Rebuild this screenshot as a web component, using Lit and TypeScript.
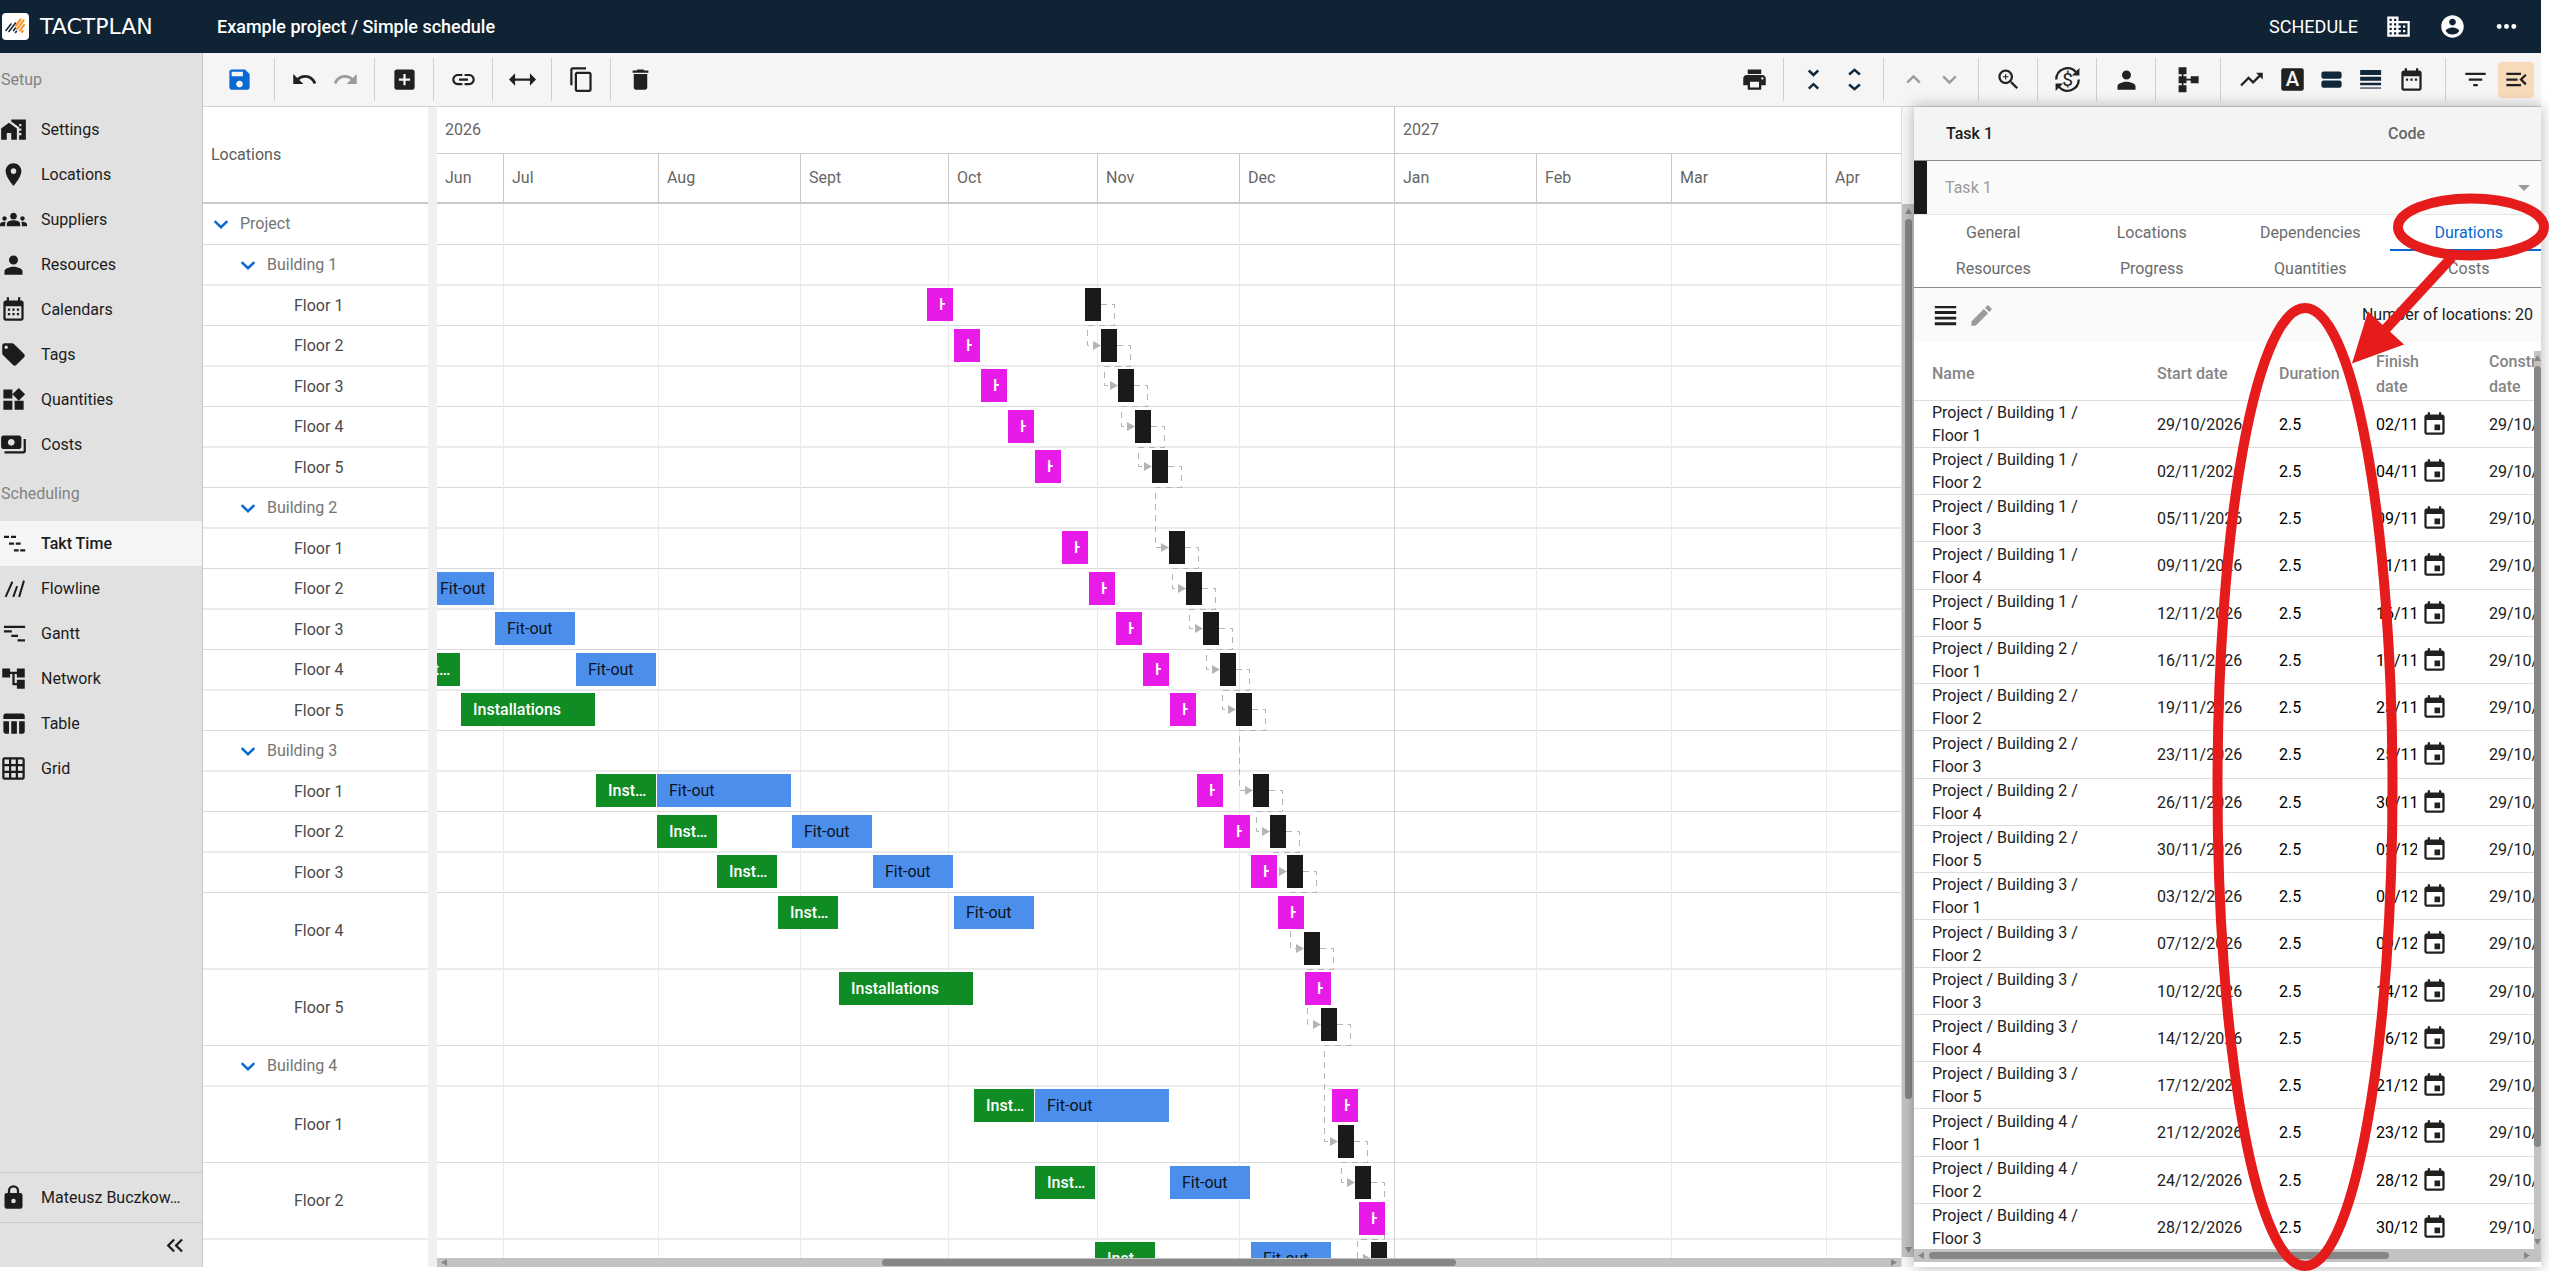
import { LitElement, html, css, svg, nothing } from "lit";
import { customElement, property } from "lit/decorators.js";
import { classMap } from "lit/directives/class-map.js";

const ICONS: Record<string, unknown> = {
  settings: svg`<path d="M1 11v10h5v-6h4v6h5V11L8 6zM10 3v1.97l7 5V11h2v2h-2v2h2v2h-2v4h6V3H10zm9 6h-2V7h2v2z"/>`,
  place: svg`<path d="M12 2C8.13 2 5 5.13 5 9c0 5.25 7 13 7 13s7-7.75 7-13c0-3.87-3.13-7-7-7zm0 9.5c-1.38 0-2.5-1.12-2.5-2.5s1.12-2.5 2.5-2.5 2.5 1.12 2.5 2.5-1.12 2.5-2.5 2.5z"/>`,
  groups: svg`<path d="M12 12.75c1.63 0 3.07.39 4.24.9 1.08.48 1.76 1.56 1.76 2.73V18H6v-1.61c0-1.18.68-2.26 1.76-2.73 1.17-.52 2.61-.91 4.24-.91zM4 13c1.1 0 2-.9 2-2s-.9-2-2-2-2 .9-2 2 .9 2 2 2zm1.13 1.1c-.37-.06-.74-.1-1.13-.1-.99 0-1.93.21-2.78.58C.48 14.9 0 15.62 0 16.43V18h4.5v-1.61c0-.83.23-1.61.63-2.29zM20 13c1.1 0 2-.9 2-2s-.9-2-2-2-2 .9-2 2 .9 2 2 2zm4 3.43c0-.81-.48-1.53-1.22-1.85-.85-.37-1.79-.58-2.78-.58-.39 0-.76.04-1.13.1.4.68.63 1.46.63 2.29V18H24v-1.57zM12 6c1.66 0 3 1.34 3 3s-1.34 3-3 3-3-1.34-3-3 1.34-3 3-3z"/>`,
  person: svg`<path d="M12 12c2.21 0 4-1.79 4-4s-1.79-4-4-4-4 1.79-4 4 1.79 4 4 4zm0 2c-2.67 0-8 1.34-8 4v3h16v-3c0-2.66-5.33-4-8-4z"/>`,
  calendar: svg`<path d="M19 4h-1V1h-2v3H8V1H6v3H5c-1.11 0-1.99.9-1.99 2L3 20c0 1.1.89 2 2 2h14c1.1 0 2-.9 2-2V6c0-1.1-.9-2-2-2zm0 16H5V9h14v11zM9 13H7v-2h2v2zm4 0h-2v-2h2v2zm4 0h-2v-2h2v2zm-8 4H7v-2h2v2zm4 0h-2v-2h2v2zm4 0h-2v-2h2v2z"/>`,
  tag: svg`<path d="M5.5 7A1.5 1.5 0 0 1 4 5.5 1.5 1.5 0 0 1 5.5 4 1.5 1.5 0 0 1 7 5.5 1.5 1.5 0 0 1 5.5 7m15.91 4.58-9-9C12.05 2.22 11.55 2 11 2H4c-1.11 0-2 .89-2 2v7c0 .55.22 1.05.59 1.41l9 9c.36.36.86.59 1.41.59.55 0 1.05-.23 1.41-.59l7-7c.37-.36.59-.87.59-1.41 0-.56-.23-1.06-.59-1.42z"/>`,
  widgets: svg`<path d="M13 13v8h8v-8h-8zM3 21h8v-8H3v8zM3 3v8h8V3H3zm13.66-1.31L11 7.34 16.66 13l5.66-5.66-5.66-5.65z"/>`,
  payments: svg`<path d="M19 14V6c0-1.1-.9-2-2-2H3c-1.1 0-2 .9-2 2v8c0 1.1.9 2 2 2h14c1.1 0 2-.9 2-2zm-9-1c-1.66 0-3-1.34-3-3s1.34-3 3-3 3 1.34 3 3-1.34 3-3 3zm13-6v11c0 1.1-.9 2-2 2H4v-2h17V7h2z"/>`,
  takt: svg`<path d="M3.5 5H8v2H3.5zM9.8 5h4.4v2H9.8zM8 11h4.5v2H8zM14 11h4.4v2H14zM12.4 17h4.2v2h-4.2zM18 17h4.4v2H18z"/>`,
  flowline: svg`<path d="M5 19.5 11 6M11.8 19.5 15.2 10M17 19.5 21.3 5" fill="none" stroke="currentColor" stroke-width="1.8"/>`,
  gantt: svg`<path d="M3.5 5h18.8v2H3.5zM3.5 9h7v2h-7zM10 13h6v2h-6zM15.6 17h6.6v2h-6.6z"/>`,
  network: svg`<path d="M22 11V3h-7v3H9V3H2v8h7V8h2v10h4v3h7v-8h-7v3h-2V8h2v3z"/>`,
  table: svg`<path d="M10 10h5v11h-5zM17 21h3c1.1 0 2-.9 2-2v-9h-5v11zm3-18H5c-1.1 0-2 .9-2 2v3h19V5c0-1.1-.9-2-2-2zM3 19c0 1.1.9 2 2 2h3V10H3v9z"/>`,
  grid: svg`<path d="M20 2H4c-1.1 0-2 .9-2 2v16c0 1.1.9 2 2 2h16c1.1 0 2-.9 2-2V4c0-1.1-.9-2-2-2zM8 20H4v-4h4v4zm0-6H4v-4h4v4zm0-6H4V4h4v4zm6 12h-4v-4h4v4zm0-6h-4v-4h4v4zm0-6h-4V4h4v4zm6 12h-4v-4h4v4zm0-6h-4v-4h4v4zm0-6h-4V4h4v4z"/>`,
  lock: svg`<path d="M12 17a2 2 0 0 0 2-2 2 2 0 0 0-2-2 2 2 0 0 0-2 2 2 2 0 0 0 2 2m6-9a2 2 0 0 1 2 2v10a2 2 0 0 1-2 2H6a2 2 0 0 1-2-2V10a2 2 0 0 1 2-2h1V6a5 5 0 0 1 5-5 5 5 0 0 1 5 5v2h1m-6-5a3 3 0 0 0-3 3v2h6V6a3 3 0 0 0-3-3z"/>`,
  dblLeft: svg`<path d="M19.4 7.41 18 6l-6 6 6 6 1.4-1.41L14.8 12zM12.4 7.41 11 6l-6 6 6 6 1.4-1.41L7.8 12z"/>`,
  save: svg`<path d="M17 3H5c-1.11 0-2 .9-2 2v14c0 1.1.89 2 2 2h14c1.1 0 2-.9 2-2V7l-4-4zm-5 16c-1.66 0-3-1.34-3-3s1.34-3 3-3 3 1.34 3 3-1.34 3-3 3zm3-10H5V5h10v4z"/>`,
  undo: svg`<path d="M12.5 8c-2.65 0-5.05.99-6.9 2.6L2 7v9h9l-3.62-3.62c1.39-1.16 3.16-1.88 5.12-1.88 3.54 0 6.55 2.31 7.6 5.5l2.37-.78C21.08 11.03 17.15 8 12.5 8z"/>`,
  redo: svg`<path d="M18.4 10.6C16.55 8.99 14.15 8 11.5 8c-4.65 0-8.58 3.03-9.96 7.22L3.9 16c1.05-3.19 4.05-5.5 7.6-5.5 1.95 0 3.73.72 5.12 1.88L13 16h9V7l-3.6 3.6z"/>`,
  add: svg`<path d="M19 3H5c-1.11 0-2 .9-2 2v14c0 1.1.89 2 2 2h14c1.1 0 2-.9 2-2V5c0-1.1-.9-2-2-2zm-2 10h-4v4h-2v-4H7v-2h4V7h2v4h4v2z"/>`,
  link: svg`<path d="M3.9 12c0-1.71 1.39-3.1 3.1-3.1h4V7H7c-2.76 0-5 2.24-5 5s2.24 5 5 5h4v-1.9H7c-1.71 0-3.1-1.39-3.1-3.1zM8 13h8v-2H8v2zm9-6h-4v1.9h4c1.71 0 3.1 1.39 3.1 3.1s-1.39 3.1-3.1 3.1h-4V17h4c2.76 0 5-2.24 5-5s-2.24-5-5-5z"/>`,
  width: svg`<path d="M0 12 5.4 6.4V11h13.2V6.4L24 12l-5.4 5.6V13H5.4v4.6z"/>`,
  copy: svg`<path d="M16 1H4c-1.1 0-2 .9-2 2v14h2V3h12V1zm3 4H8c-1.1 0-2 .9-2 2v14c0 1.1.9 2 2 2h11c1.1 0 2-.9 2-2V7c0-1.1-.9-2-2-2zm0 16H8V7h11v14z"/>`,
  trash: svg`<path d="M6 19c0 1.1.9 2 2 2h8c1.1 0 2-.9 2-2V7H6v12zM19 4h-3.5l-1-1h-5l-1 1H5v2h14V4z"/>`,
  print: svg`<path d="M19 8H5c-1.66 0-3 1.34-3 3v6h4v4h12v-4h4v-6c0-1.66-1.34-3-3-3zm-3 11H8v-5h8v5zm3-7c-.55 0-1-.45-1-1s.45-1 1-1 1 .45 1 1-.45 1-1 1zm-1-9H6v4h12V3z"/>`,
  collapse: svg`<path d="m7.8 4 4.2 4 4.2-4M7.8 20.2l4.2-4 4.2 4" fill="none" stroke="#10283a" stroke-width="2.2"/>`,
  expand: svg`<path d="M7.2 7.6 12 3.4l4.8 4.2M7.2 16.4l4.8 4.2 4.8-4.2" fill="none" stroke="#10283a" stroke-width="2.2"/>`,
  up: svg`<path d="m6.4 14.8 5.6-5.6 5.6 5.6" fill="none" stroke="currentColor" stroke-width="2"/>`,
  down: svg`<path d="m6.4 9.2 5.6 5.6 5.6-5.6" fill="none" stroke="currentColor" stroke-width="2"/>`,
  chevron: svg`<path d="m4.400 8.600 7.600 7.200 7.600-7.200" fill="none" stroke="currentColor" stroke-width="3"/>`,
  zoom: svg`<path d="M15.5 14h-.79l-.28-.27C15.41 12.59 16 11.11 16 9.5 16 5.91 13.09 3 9.5 3S3 5.91 3 9.5 5.91 16 9.5 16c1.61 0 3.09-.59 4.23-1.57l.27.28v.79l5 4.99L20.49 19l-4.99-5zm-6 0C7.01 14 5 11.99 5 9.5S7.01 5 9.5 5 14 7.01 14 9.5 11.99 14 9.5 14zM10 7H9v2H7v1h2v2h1v-2h2V9h-2V7z"/>`,
  currency: svg`<path d="M2 12A10 10 0 0 1 19.4 5.3M22 12A10 10 0 0 1 4.6 18.7" fill="none" stroke="currentColor" stroke-width="2"/><path d="M22.6 1.8v6.7h-6.7zM1.4 22.2v-6.7h6.7z"/><text x="12" y="18" text-anchor="middle" font-size="17" font-family="Roboto, sans-serif">$</text>`,
  tree: svg`<path d="M3.2 1h7v6.4h-7zM3.2 9h7v6.4h-7zM3.2 17h7v6.4h-7zM6 7h1.5v11H6zM10 11.4h5v1.5h-5zM14 9h7v6.4h-7z"/>`,
  trend: svg`<path d="m16 6 2.29 2.29-4.88 4.88-4-4L2 16.59 3.41 18l6-6 4 4 6.3-6.29L22 12V6z"/>`,
  letter: svg`<rect x="2" y="2" width="20" height="20" rx="2"/><text x="12" y="18.2" text-anchor="middle" font-size="18" font-weight="500" font-family="Roboto, sans-serif" fill="#f5f5f5">A</text>`,
  bars: svg`<rect x="3" y="4.8" width="18" height="6.6" rx="2" fill="#10283a"/><rect x="3" y="12.8" width="18" height="6.6" rx="2" fill="#10283a"/>`,
  lines: svg`<path d="M2.8 3.6h18.6V8H2.8zM2.8 9.6h18.6V13H2.8zM2.8 14.8h18.6v2.4H2.8z" fill="#10283a"/><path d="M2.8 18.8h18.6v1.6H2.8z" fill="#6d7686"/>`,
  dates: svg`<path d="M9 11H7v2h2v-2zm4 0h-2v2h2v-2zm4 0h-2v2h2v-2zm2-7h-1V2h-2v2H8V2H6v2H5c-1.11 0-1.99.9-1.99 2L3 20c0 1.1.89 2 2 2h14c1.1 0 2-.9 2-2V6c0-1.1-.9-2-2-2zm0 16H5V9h14v11z"/>`,
  filter: svg`<path d="M10 18h4v-2h-4v2zM3 6v2h18V6H3zm3 7h12v-2H6v2z"/>`,
  menuOpen: svg`<path d="M3 18h13v-2H3v2zm0-5h10v-2H3v2zm0-7v2h13V6H3zm18 9.59L17.42 12 21 8.41 19.59 7l-5 5 5 5L21 15.59z"/>`,
  domain: svg`<path d="M12 7V3H2v18h20V7H12zM6 19H4v-2h2v2zm0-4H4v-2h2v2zm0-4H4V9h2v2zm0-4H4V5h2v2zm4 12H8v-2h2v2zm0-4H8v-2h2v2zm0-4H8V9h2v2zm0-4H8V5h2v2zm10 12h-8v-2h2v-2h-2v-2h2v-2h-2V9h8v10zm-2-8h-2v2h2v-2zm0 4h-2v2h2v-2z"/>`,
  account: svg`<path d="M12 2C6.48 2 2 6.48 2 12s4.48 10 10 10 10-4.48 10-10S17.52 2 12 2zm0 3c1.66 0 3 1.34 3 3s-1.34 3-3 3-3-1.34-3-3 1.34-3 3-3zm0 14.2c-2.5 0-4.71-1.28-6-3.22.03-1.99 4-3.08 6-3.08 1.99 0 5.97 1.09 6 3.08-1.29 1.94-3.5 3.22-6 3.22z"/>`,
  more: svg`<circle cx="5.5" cy="12" r="2.2"/><circle cx="12" cy="12" r="2.2"/><circle cx="18.5" cy="12" r="2.2"/>`,
  rows: svg`<path d="M2.5 3.5h19v2h-19zM2.5 8h19v2.6h-19zM2.5 13h19v2.6h-19zM2.5 18h19v2.6h-19z"/>`,
  edit: svg`<path d="M3 17.25V21h3.75L17.81 9.94l-3.75-3.75L3 17.25zM20.71 7.04c.39-.39.39-1.02 0-1.41l-2.34-2.34c-.39-.39-1.02-.39-1.41 0l-1.83 1.83 3.75 3.75 1.83-1.83z"/>`,
  event: svg`<path d="M17 12h-5v5h5v-5zM16 1v2H8V1H6v2H5c-1.11 0-1.99.9-1.99 2L3 19c0 1.1.89 2 2 2h14c1.1 0 2-.9 2-2V5c0-1.1-.9-2-2-2h-1V1h-2zm3 18H5V8h14v11z"/>`,
};

@customElement("app-icon")
class AppIcon extends LitElement {
  @property() name = "";
  static styles = css`
    :host { display: inline-flex; flex: none; width: 27px; height: 27px; }
    .glyph { width: 100%; height: 100%; display: block; fill: currentColor; overflow: visible; }
  `;
  render() {
    return html`<svg class="glyph" viewBox="0 0 24 24" aria-hidden="true">${ICONS[this.name]}</svg>`;
  }
}

@customElement("scroll-track")
class ScrollTrack extends LitElement {
  @property() axis = "y";
  @property({ type: Number }) from = 0;
  @property({ type: Number }) to = 100;
  static styles = css`
    :host { display: flex; background: #c3c3c3; overflow: hidden; }
    .track { display: flex; flex: 1; align-items: center; min-width: 0; min-height: 0; }
    .track.y { flex-direction: column; }
    .arrow { flex: none; fill: #868686; width: 15px; height: 9px; }
    .y .arrow { width: 9px; height: 15px; }
    .lane { flex: 1; display: flex; align-self: stretch; justify-content: flex-start; align-items: center; min-width: 0; min-height: 0; }
    .y .lane { flex-direction: column; }
    .thumb { background: #868686; border-radius: 4px; height: 7px; flex: none; }
    .y .thumb { width: 7px; height: auto; }
  `;
  render() {
    const v = this.axis === "y";
    const size = this.to - this.from;
    const before = v ? `height:${this.from}%` : `width:${this.from}%`;
    const thumb = v ? `height:${size}%` : `width:${size}%`;
    return html`<div class="track ${this.axis}">
      <svg class="arrow" viewBox=${v ? "0 0 9 15" : "0 0 15 9"}><path d=${v ? "M1 10h7L4.5 4z" : "M10 1v7L4 4.5z"} /></svg>
      <div class="lane"><div style=${before}></div><div class="thumb" style=${thumb}></div></div>
      <svg class="arrow" viewBox=${v ? "0 0 9 15" : "0 0 15 9"}><path d=${v ? "M1 5h7L4.5 11z" : "M5 1v7l6-3.5z"} /></svg>
    </div>`;
  }
}

const NAV_SETUP = [
  ["settings", "Settings"], ["place", "Locations"], ["groups", "Suppliers"], ["person", "Resources"],
  ["calendar", "Calendars"], ["tag", "Tags"], ["widgets", "Quantities"], ["payments", "Costs"],
];
const NAV_SCHEDULING = [
  ["takt", "Takt Time"], ["flowline", "Flowline"], ["gantt", "Gantt"], ["network", "Network"],
  ["table", "Table"], ["grid", "Grid"],
];

/** Month columns of the time axis; the last one takes the rest of the width. */
const MONTHS: [string, number][] = [
  ["Jun", 66], ["Jul", 155], ["Aug", 142], ["Sept", 148], ["Oct", 149], ["Nov", 142],
  ["Dec", 155], ["Jan", 142], ["Feb", 135], ["Mar", 155], ["Apr", 0],
];

type Kind = "fit" | "inst" | "hand" | "task";
interface Bar { kind: Kind; x: number; w: number; lane?: number; }
interface Row { label: string; level: number; tall?: boolean; bars: Bar[]; }
const fit = (x: number, w = 80): Bar => ({ kind: "fit", x, w });
const inst = (x: number, w = 60): Bar => ({ kind: "inst", x, w });
const hand = (x: number, lane = 0): Bar => ({ kind: "hand", x, w: 26, lane });
const task = (x: number, lane = 0): Bar => ({ kind: "task", x, w: 16, lane });
const group = (label: string, level: number): Row => ({ label, level, bars: [] });
const floor = (n: number, ...bars: Bar[]): Row => ({ label: `Floor ${n}`, level: 2, bars });
const tallFloor = (n: number, ...bars: Bar[]): Row => ({ label: `Floor ${n}`, level: 2, tall: true, bars });

const ROWS: Row[] = [
  group("Project", 0),
  group("Building 1", 1),
  floor(1, hand(490), task(648)),
  floor(2, hand(517), task(664)),
  floor(3, hand(544), task(681)),
  floor(4, hand(571), task(698)),
  floor(5, hand(598), task(715)),
  group("Building 2", 1),
  floor(1, hand(625), task(732)),
  floor(2, fit(-9, 66), hand(652), task(749)),
  floor(3, fit(58), hand(679), task(766)),
  floor(4, inst(-37), fit(139), hand(706), task(783)),
  floor(5, inst(24, 134), hand(733), task(799)),
  group("Building 3", 1),
  floor(1, inst(159), fit(220, 134), hand(760), task(816)),
  floor(2, inst(220), fit(355), hand(787), task(833)),
  floor(3, inst(280), fit(436), hand(814), task(850)),
  tallFloor(4, inst(341), fit(517), hand(841), task(867, 1)),
  tallFloor(5, inst(402, 134), hand(868), task(884, 1)),
  group("Building 4", 1),
  tallFloor(1, inst(537), fit(598, 134), hand(895), task(901, 1)),
  tallFloor(2, inst(598), fit(733), task(918), hand(922, 1)),
  tallFloor(3, inst(658), fit(814), task(934), hand(949, 1)),
];

/** Odd rows end on a thin rule, even rows on a soft two-pixel one. */
const rowHeight = (row: Row, i: number) => (i === 0 ? 41 : (row.tall ? 76 : 40) + (i % 2));
const TOPS: number[] = [];
ROWS.reduce((y, row, i) => { TOPS.push(y); return y + rowHeight(row, i); }, 0);
const barTop = (i: number, lane = 0) => TOPS[i] + (i % 2 ? 3 : 2) + lane * 36;

const DURATIONS: [number, number, string, string][] = [
  [1, 1, "29/10", "02/11"], [1, 2, "02/11", "04/11"], [1, 3, "05/11", "09/11"], [1, 4, "09/11", "11/11"],
  [1, 5, "12/11", "16/11"], [2, 1, "16/11", "18/11"], [2, 2, "19/11", "23/11"], [2, 3, "23/11", "25/11"],
  [2, 4, "26/11", "30/11"], [2, 5, "30/11", "02/12"], [3, 1, "03/12", "07/12"], [3, 2, "07/12", "09/12"],
  [3, 3, "10/12", "14/12"], [3, 4, "14/12", "16/12"], [3, 5, "17/12", "21/12"], [4, 1, "21/12", "23/12"],
  [4, 2, "24/12", "28/12"], [4, 3, "28/12", "30/12"],
];

const base = css`
  * { box-sizing: border-box; }
  button, input, select { font: inherit; color: inherit; background: none; border: 0; padding: 0; margin: 0; }
  button { cursor: pointer; }
  a { color: inherit; text-decoration: none; }
`;

@customElement("top-bar")
class TopBar extends LitElement {
  static styles = [base, css`
    :host { display: flex; align-items: center; height: 53px; flex: none; background: #0f2334; color: #fff; padding: 0 21px 0 2px; font-size: 18px; }
    .brand { display: flex; align-items: center; gap: 11px; width: 215px; }
    .mark { width: 27px; height: 27px; flex: none; }
    .word { font: 22px/24px "DejaVu Sans", sans-serif; }
    .title { font-size: 18px; font-weight: 500; margin: 0; flex: 1; line-height: 24px; }
    .actions { display: flex; align-items: center; gap: 27px; }
    .btn { display: flex; }
  `];
  render() {
    return html`
      <a class="brand" href="#">
        <svg class="mark" viewBox="0 0 27 27" aria-hidden="true">
          <rect width="27" height="27" rx="4" fill="#fff" />
          <g stroke-linecap="round" fill="none" stroke-width="1.6">
            <path d="M4 17.5 9 11M7 18.5 13.500 10M11.500 17.500l2-2.500M13.500 19.500l1-1.200" stroke="#16293c" />
            <path d="M14 12.500 18.500 6.500M15.200 15.800 21.500 7.500M18 17.300l4-5.300M20 19l.8-1" stroke="#f39a2d" stroke-width="2.2" />
          </g>
        </svg>
        <span class="word">TACTPLAN</span>
      </a>
      <h1 class="title">Example project / Simple schedule</h1>
      <div class="actions">
        <a href="#">SCHEDULE</a>
        <button class="btn" aria-label="Company"><app-icon name="domain"></app-icon></button>
        <button class="btn" aria-label="Account"><app-icon name="account"></app-icon></button>
        <button class="btn" aria-label="More"><app-icon name="more"></app-icon></button>
      </div>`;
  }
}

@customElement("side-nav")
class SideNav extends LitElement {
  static styles = [base, css`
    :host { display: flex; flex-direction: column; width: 203px; flex: none; background: #e1e1e1; border-right: 1px solid #c4c4c4; color: #1c1c1c; }
    .heading { height: 54px; line-height: 54px; padding-left: 1px; color: #828282; margin: 0; font-size: 16px; font-weight: 400; }
    .item { display: flex; align-items: center; gap: 14px; height: 45px; width: 100%; text-align: left; }
    .item.active { background: #f5f5f5; font-weight: 500; }
    .name { overflow: hidden; text-overflow: ellipsis; white-space: nowrap; min-width: 0; }
    .foot { margin-top: auto; }
    .user { height: 50px; border-top: 1px solid #c9c9c9; padding-right: 14px; }
    .fold { display: flex; justify-content: flex-end; align-items: center; width: 100%; height: 45px; border-top: 1px solid #c9c9c9; padding-right: 14px; }
  `];
  item([icon, label]: string[]) {
    return html`<a class=${classMap({ item: true, active: label === "Takt Time" })} href="#"><app-icon name=${icon}></app-icon><span class="name">${label}</span></a>`;
  }
  render() {
    return html`
      <h2 class="heading">Setup</h2>
      <nav>${NAV_SETUP.map((n) => this.item(n))}</nav>
      <h2 class="heading">Scheduling</h2>
      <nav>${NAV_SCHEDULING.map((n) => this.item(n))}</nav>
      <div class="foot">
        <button class="item user"><app-icon name="lock"></app-icon><span class="name">Mateusz Buczkow…</span></button>
        <button class="fold" aria-label="Collapse menu"><app-icon name="dblLeft"></app-icon></button>
      </div>`;
  }
}

@customElement("tool-bar")
class ToolBar extends LitElement {
  static styles = [base, css`
    :host { display: flex; justify-content: space-between; height: 54px; flex: none; background: #f5f5f5; border-bottom: 1px solid #d2d2d2; color: #212121; }
    .side { display: flex; align-items: center; }
    .group { display: flex; align-items: center; gap: 5px; height: 43px; padding: 0 11px; border-right: 1px solid #d0d0d0; }
    .group.last { border-right: 0; }
    .group.wide { padding: 0 17px 0 18px; }
    .group.mid { padding: 0 14px; }
    .group.views { padding: 0 16px 0 12px; }
    .group.tight { gap: 0; }
    .group.end { padding-right: 7px; }
    .btn { display: flex; align-items: center; justify-content: center; width: 36px; height: 36px; border-radius: 4px; }
    .btn.slim { width: 32px; }
    .btn.primary { color: #0a69d0; }
    .btn:disabled { color: #9b9b9b; }
    .btn.on { background: #f8d9b9; }
  `];
  btn(icon: string, label: string, cls = "", disabled = false) {
    return html`<button class="btn ${cls}" aria-label=${label} ?disabled=${disabled}><app-icon name=${icon}></app-icon></button>`;
  }
  render() {
    return html`
      <div class="side">
        <div class="group wide">${this.btn("save", "Save", "primary")}</div>
        <div class="group">${this.btn("undo", "Undo")}${this.btn("redo", "Redo", "", true)}</div>
        <div class="group">${this.btn("add", "Add")}</div>
        <div class="group">${this.btn("link", "Link")}</div>
        <div class="group">${this.btn("width", "Fit width")}</div>
        <div class="group">${this.btn("copy", "Copy")}</div>
        <div class="group last">${this.btn("trash", "Delete")}</div>
      </div>
      <div class="side">
        <div class="group">${this.btn("print", "Print")}</div>
        <div class="group">${this.btn("collapse", "Collapse all")}${this.btn("expand", "Expand all")}</div>
        <div class="group tight">${this.btn("up", "Move up", "", true)}${this.btn("down", "Move down", "", true)}</div>
        <div class="group">${this.btn("zoom", "Zoom")}</div>
        <div class="group">${this.btn("currency", "Costs")}</div>
        <div class="group">${this.btn("person", "Resources")}</div>
        <div class="group mid">${this.btn("tree", "Structure")}</div>
        <div class="group views">
          ${this.btn("trend", "Trend")}${this.btn("letter", "Labels")}${this.btn("bars", "Bars", "slim")}
          ${this.btn("lines", "Density")}${this.btn("dates", "Dates")}
        </div>
        <div class="group last end">${this.btn("filter", "Filter")}${this.btn("menuOpen", "Details panel", "on")}</div>
      </div>`;
  }
}

@customElement("takt-chart")
class TaktChart extends LitElement {
  static styles = [base, css`
    :host { display: flex; flex: 1; min-width: 0; background: #fff; color: #666; }
    .tree { width: 225px; flex: none; display: flex; flex-direction: column; overflow: hidden; }
    .head { height: 97px; flex: none; border-bottom: 2px solid #c9c9c9; }
    .tree .head { display: flex; align-items: center; padding-left: 8px; color: #5c5c5c; }
    .rows { flex: 1; min-height: 0; overflow: hidden; position: relative; }
    .row { display: flex; align-items: center; border-bottom: 1px solid #d9d9d9; height: 40px; }
    .row.first { height: 41px; }
    .row.soft { border-bottom: 2px solid #ebebeb; height: 41px; }
    .row.tall { height: 76px; }
    .row.tall.soft { height: 77px; }
    .level0 { padding-left: 8px; }
    .level1 { padding-left: 35px; }
    .level2 { padding-left: 91px; color: #4a4a4a; }
    .toggle { display: flex; align-items: center; gap: 9px; color: #757575; }
    .chev { width: 20px; height: 20px; color: #0a69d0; }
    .split { width: 9px; flex: none; background: #f0f0f0; }
    .time { flex: 1; min-width: 0; display: flex; flex-direction: column; overflow: hidden; }
    .years, .months { display: flex; }
    .years { height: 47px; border-bottom: 1px solid #c9c9c9; }
    .months { height: 48px; }
    .cell { flex: none; display: flex; align-items: center; padding-left: 8px; border-left: 1px solid #c9c9c9; overflow: hidden; }
    .cell:first-child { border-left: 0; }
    .cell:last-child { flex: 1; }
    .grid { position: absolute; inset: 0; display: flex; }
    .col { flex: none; border-left: 1px solid #ebebeb; }
    .col:first-child { border-left: 0; }
    .col:last-child { flex: 1; }
    .col.year { border-color: #d6d6d6; }
    .links { position: absolute; left: 0; top: 0; width: 100%; height: 100%; overflow: hidden; }
    .bar { position: absolute; height: 33px; line-height: 33px; overflow: hidden; white-space: nowrap; }
    .label { display: block; overflow: hidden; text-overflow: ellipsis; }
    .fit { background: #4b8eeb; color: #0b1420; padding: 0 0 0 12px; }
    .inst { background: #108c24; color: #fff; font-weight: 500; padding: 0 8px 0 12px; }
    .hand { background: #e81ae8; color: #fff; font-weight: 500; padding: 0 8px 0 12px; }
    .hand .label { text-overflow: clip; }
    .task { background: #1a1a1a; }
    .hbar { height: 9px; flex: none; }
    .vcol { width: 13px; flex: none; display: flex; flex-direction: column; border-left: 1px solid #e0e0e0; background: #f8f8f8; }
    .vhead { height: 97px; flex: none; }
    .vbar { flex: 1; }
    .corner { height: 10px; flex: none; }
  `];

  rowClass(row: Row, i: number) {
    return classMap({ row: true, first: i === 0, soft: i % 2 === 1, tall: !!row.tall, [`level${row.level}`]: true });
  }

  links() {
    const tasks = ROWS.flatMap((row, i) => row.bars.filter((b) => b.kind === "task").map((b) => ({
      x: b.x, y: barTop(i, b.lane) + 16.5, end: TOPS[i] + rowHeight(row, i) - 0.5,
    })));
    return tasks.slice(1).map((to, k) => {
      const from = tasks[k];
      const d = `M${from.x + 16} ${from.y}H${from.x + 29.5}V${from.end}H${to.x - 13.5}V${to.y}H${to.x - 6}`;
      return svg`<path d=${d} fill="none" stroke="#b4b4b4" stroke-dasharray="6 5"/><path d=${`M${to.x - 8} ${to.y - 4.5}v9l8-4.5z`} fill="#b4b4b4"/>`;
    });
  }

  bar(b: Bar, i: number) {
    const text = { fit: "Fit-out", inst: "Installations", hand: "H", task: "" }[b.kind];
    const short = b.kind === "inst" && b.w < 100 ? "Inst…" : text;
    return html`<div class="bar ${b.kind}" style="left:${b.x}px;top:${barTop(i, b.lane)}px;width:${b.w}px">
      ${text ? html`<span class="label">${short}</span>` : nothing}
    </div>`;
  }

  render() {
    return html`
      <div class="tree">
        <div class="head">Locations</div>
        <div class="rows">
          ${ROWS.map((row, i) => html`<div class=${this.rowClass(row, i)}>
            ${row.level < 2
              ? html`<button class="toggle" aria-expanded="true"><app-icon class="chev" name="chevron"></app-icon>${row.label}</button>`
              : i < ROWS.length - 1 ? row.label : nothing}
          </div>`)}
        </div>
      </div>
      <div class="split"></div>
      <div class="time">
        <div class="head">
          <div class="years"><div class="cell" style="width:957px">2026</div><div class="cell">2027</div></div>
          <div class="months">${MONTHS.map(([m, w]) => html`<div class="cell" style="width:${w}px">${m}</div>`)}</div>
        </div>
        <div class="rows">
          ${ROWS.map((row, i) => html`<div class=${this.rowClass(row, i)}></div>`)}
          <div class="grid">${MONTHS.map(([m, w]) => html`<div class=${classMap({ col: true, year: m === "Jan" })} style="width:${w}px"></div>`)}</div>
          <svg class="links" aria-hidden="true">${this.links()}</svg>
          ${ROWS.map((row, i) => row.bars.map((b) => this.bar(b, i)))}
        </div>
        <scroll-track class="hbar" axis="x" from="30" to="70"></scroll-track>
      </div>
      <div class="vcol">
        <div class="vhead"></div>
        <scroll-track class="vbar" axis="y" from="0" to="86"></scroll-track>
        <div class="corner"></div>
      </div>`;
  }
}

@customElement("task-panel")
class TaskPanel extends LitElement {
  static styles = [base, css`
    :host { display: flex; flex-direction: column; width: 627px; flex: none; background: #fff; color: #212121; box-shadow: 0 0 14px rgba(0, 0, 0, 0.3); overflow: hidden; }
    .titles { display: flex; align-items: center; height: 54px; flex: none; background: #f4f4f4; border-bottom: 1px solid #8c8c8c; padding-left: 32px; font-weight: 500; }
    .task { flex: 1; color: #1c1c1c; }
    .code { width: 153px; color: #666; }
    .pick { display: flex; align-items: center; height: 54px; flex: none; background: #fafafa; border-bottom: 1px solid #e6e6e6; padding-right: 11px; }
    .swatch { width: 13px; align-self: stretch; background: #1a1a1a; }
    .select { flex: 1; padding-left: 18px; appearance: none; color: #9a9a9a; opacity: 1; }
    .caret { width: 12px; height: 6px; fill: #9a9a9a; }
    .tabs { display: grid; grid-template-columns: repeat(4, 1fr); margin-right: -7px; height: 72px; flex: none; grid-auto-rows: 36px; }
    .tab { color: #6b6b6b; border-bottom: 2px solid transparent; padding-top: 2px; }
    .tab.on { color: #0a69d0; border-color: #0a69d0; }
    .tools { display: flex; align-items: center; gap: 9px; height: 55px; flex: none; border-top: 1px solid #8c8c8c; background: #fafafa; padding: 0 8px 0 18px; }
    .tool { display: flex; }
    .tool:disabled { color: #9b9b9b; }
    .count { margin-left: auto; }
    .sheet { display: flex; flex: 1; min-height: 0; }
    .clip { flex: 1; min-width: 0; overflow: hidden; }
    .table { table-layout: fixed; width: 677px; border-collapse: separate; border-spacing: 0; }
    .c1 { width: 225px; } .c2 { width: 122px; } .c3 { width: 97px; } .c4 { width: 113px; } .c5 { width: 120px; }
    .th { height: 59px; padding: 5px 28px 0 18px; text-align: left; font-weight: 500; color: #858585; line-height: 25px; border-bottom: 1px solid #dedede; }
    .td { height: 47px; padding: 0 0 0 18px; line-height: 23px; border-bottom: 1px solid #dedede; white-space: nowrap; overflow: hidden; }
    .tr:nth-child(4n) .td { height: 48px; }
    .name { white-space: normal; padding-right: 50px; }
    .num { width: 60px; color: #000; }
    .date { width: 41px; color: #000; }
    .finish { display: flex; align-items: center; gap: 4px; }
    .vbar { width: 7px; flex: none; margin-top: 9px; }
    .hbar { height: 13px; flex: none; margin-bottom: 5px; padding-right: 7px; }
    .thn { padding-right: 0; }
  `];
  render() {
    const tabs = ["General", "Locations", "Dependencies", "Durations", "Resources", "Progress", "Quantities", "Costs"];
    return html`
      <div class="titles"><span class="task">Task 1</span><span class="code">Code</span></div>
      <div class="pick">
        <span class="swatch"></span>
        <select class="select" aria-label="Task" disabled><option>Task 1</option></select>
        <svg class="caret" viewBox="0 0 12 6" aria-hidden="true"><path d="M0 0h12L6 6z" /></svg>
      </div>
      <div class="tabs" role="tablist">
        ${tabs.map((t) => html`<button role="tab" aria-selected=${t === "Durations"} class=${classMap({ tab: true, on: t === "Durations" })}>${t}</button>`)}
      </div>
      <div class="tools">
        <button class="tool" aria-label="Rows"><app-icon name="rows"></app-icon></button>
        <button class="tool" aria-label="Edit" disabled><app-icon name="edit"></app-icon></button>
        <span class="count">Number of locations: 20</span>
      </div>
      <div class="sheet">
        <div class="clip">
          <table class="table">
            <thead><tr>
              <th class="th c1">Name</th><th class="th thn c2">Start date</th><th class="th thn c3">Duration</th>
              <th class="th c4">Finish date</th><th class="th c5">Constraint date</th>
            </tr></thead>
            <tbody>
              ${DURATIONS.map(([b, f, start, finish]) => {
                const place = `Project / Building ${b} / Floor ${f}`;
                return html`<tr class="tr">
                  <td class="td name">${place}</td>
                  <td class="td">${start}/2026</td>
                  <td class="td"><input class="num" aria-label="Duration, ${place}" .value=${"2.5"} /></td>
                  <td class="td"><div class="finish">
                    <input class="date" aria-label="Finish date, ${place}" .value=${finish + "/2026"} />
                    <button class="tool" aria-label="Pick finish date"><app-icon name="event"></app-icon></button>
                  </div></td>
                  <td class="td">29/10/2026</td>
                </tr>`;
              })}
            </tbody>
          </table>
        </div>
        <scroll-track class="vbar" axis="y" from="0" to="90"></scroll-track>
      </div>
      <scroll-track class="hbar" axis="x" from="0" to="78"></scroll-track>`;
  }
}

@customElement("app-root")
class AppRoot extends LitElement {
  static styles = [base, css`
    :host { display: block; position: relative; height: 100vh; overflow: hidden; background: #fff; font: 16px/20px Roboto, "Liberation Sans", sans-serif; }
    .app { display: flex; flex-direction: column; height: 100%; padding: 0 8px 4px 0; }
    .main { display: flex; flex: 1; min-height: 0; }
    .work { display: flex; flex-direction: column; flex: 1; min-width: 0; }
    .content { display: flex; flex: 1; min-height: 0; }
    .notes { position: absolute; top: 0; right: 0; width: 349px; height: 1271px; pointer-events: none; }
  `];
  render() {
    return html`
      <div class="app">
        <top-bar></top-bar>
        <div class="main">
          <side-nav></side-nav>
          <div class="work">
            <tool-bar></tool-bar>
            <div class="content"><takt-chart></takt-chart><task-panel></task-panel></div>
          </div>
        </div>
      </div>
      <svg class="notes" viewBox="2200 0 349 1271" aria-hidden="true">
        <g fill="none" stroke="#e61c1c" stroke-width="10">
          <ellipse cx="2471" cy="227" rx="73" ry="28.5" />
          <ellipse cx="2305" cy="787" rx="87.5" ry="479" />
          <path d="M2452 257 2382 333" />
        </g>
        <path d="M2352 363.5 2368 311.5 2404 344.5z" fill="#e61c1c" />
      </svg>`;
  }
}
